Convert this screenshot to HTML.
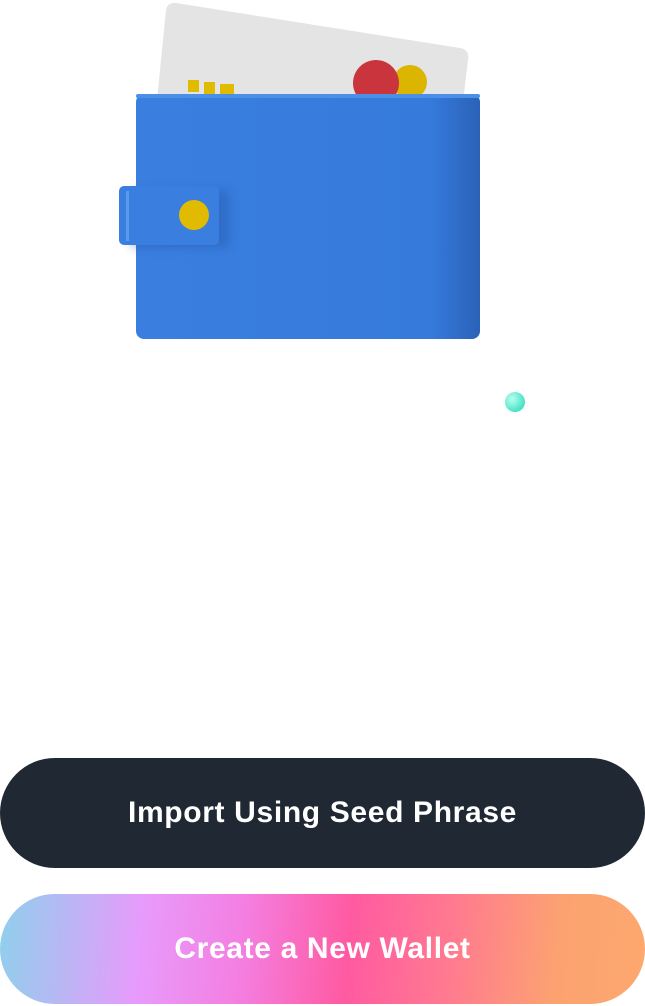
<!DOCTYPE html>
<html><head><meta charset="utf-8"><style>
html,body{margin:0;padding:0;background:#fff;width:645px;height:1006px;overflow:hidden;position:relative;font-family:"Liberation Sans",sans-serif}
.btn{position:absolute;left:0;width:645px;height:110px;border-radius:55px;color:#fff;font-weight:bold;font-size:30px;display:flex;align-items:center;justify-content:center;letter-spacing:0.65px}
</style></head><body>
<svg width="645" height="430" style="position:absolute;left:0;top:0">
<defs>
<linearGradient id="w" x1="0" x2="1"><stop offset="0" stop-color="#3a7fe0"/><stop offset="0.85" stop-color="#367bdc"/><stop offset="1" stop-color="#2a62b8"/></linearGradient>
<radialGradient id="t" cx="0.35" cy="0.35" r="0.7"><stop offset="0" stop-color="#b8fff0"/><stop offset="1" stop-color="#3fe0c2"/></radialGradient>
<filter id="b" x="-30%" y="-30%" width="160%" height="160%"><feGaussianBlur stdDeviation="5"/></filter>
</defs>
<path d="M176 3 L460 48 Q470 50 468 60 L462 110 L156 110 L166 10 Q168 2 176 3Z" fill="#e4e4e4"/>
<rect x="188" y="80" width="11" height="12" fill="#e1bb00"/>
<rect x="204" y="82" width="11" height="12" fill="#e1bb00"/>
<rect x="220" y="84" width="14" height="12" fill="#e1bb00"/>
<circle cx="410" cy="82" r="17" fill="#dcb500"/>
<circle cx="376" cy="83" r="23" fill="#c9343d"/>
<rect x="136" y="94" width="344" height="245" rx="8" fill="url(#w)"/>
<rect x="136" y="94" width="344" height="4" rx="2" fill="#4a8fe8"/>
<rect x="130" y="190" width="100" height="58" rx="5" fill="#1f4e9c" opacity="0.35" filter="url(#b)"/>
<rect x="119" y="186" width="100" height="59" rx="5" fill="#3a7fe0"/>
<rect x="126" y="191" width="3" height="50" fill="#5a9aee"/>
<circle cx="194" cy="215" r="15" fill="#e1bb00"/>
<circle cx="515" cy="402" r="10" fill="url(#t)"/>
</svg>
<div class="btn" style="top:758px;background:#202833">Import Using Seed Phrase</div>
<div class="btn" style="top:894px;background:linear-gradient(95deg,#8fd0ec 0%,#e79bfc 22%,#f47ee0 38%,#ff5aa1 54%,#ff7b8f 70%,#fca271 86%,#fda86e 100%)">Create a New Wallet</div>
</body></html>
